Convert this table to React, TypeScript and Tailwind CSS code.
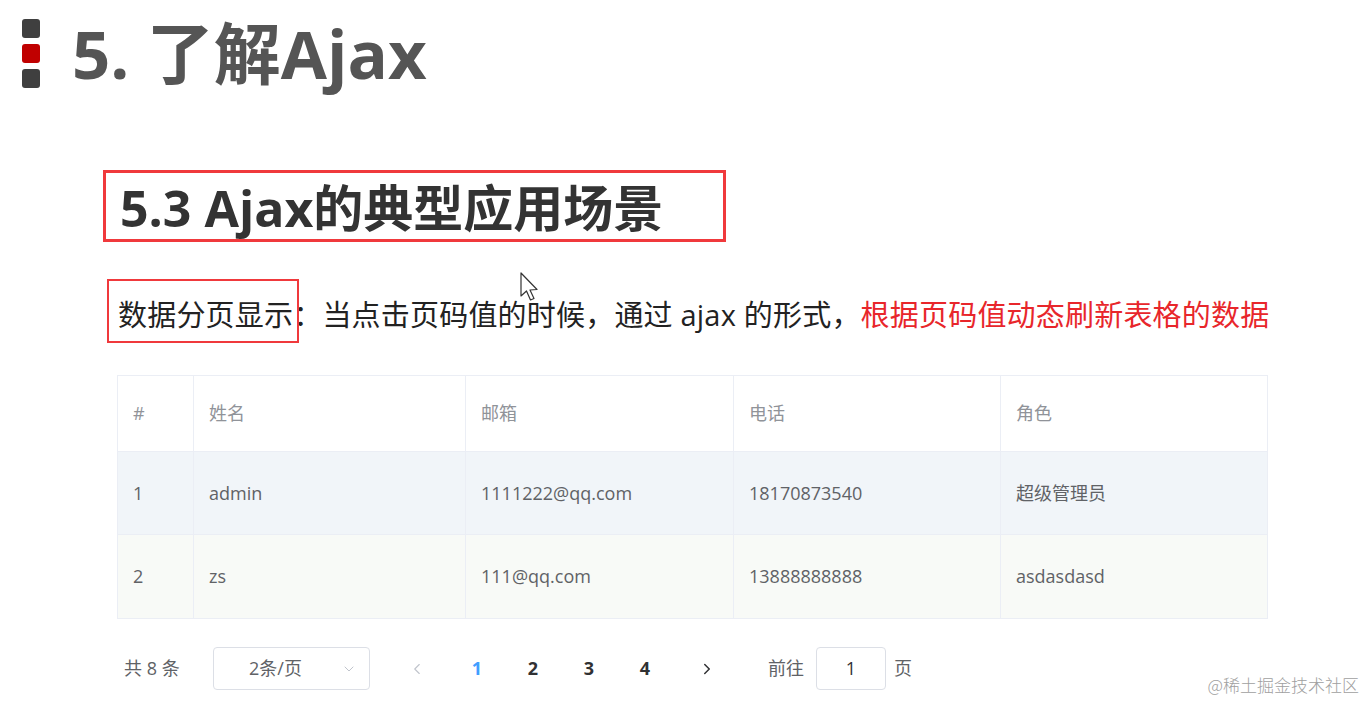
import { ChevronDown, ChevronLeft, ChevronRight } from 'lucide-react'

const rows = [
  { id: 1, name: 'admin', email: '1111222@qq.com', phone: '18170873540', role: '超级管理员' },
  { id: 2, name: 'zs', email: '111@qq.com', phone: '13888888888', role: 'asdasdasd' },
]

const font = { fontFamily: '"Open Sans", "Noto Sans CJK SC", sans-serif' }

function Cursor() {
  return (
    <svg width="22" height="32" viewBox="0 0 22 32" className="absolute left-[520px] top-[272px]">
      <path d="M1 1 L1 24 L6.5 19 L10.5 28 L14 26.5 L10 18 L17 17.5 Z" fill="#fff" stroke="#333" strokeWidth="1.2" strokeLinejoin="round" />
    </svg>
  )
}

export default function App() {
  return (
    <div className="relative w-[1367px] h-[703px] bg-white overflow-hidden" style={font}>
      {/* Slide title */}
      <div className="flex items-center pt-[19px] pl-[22px]">
        <div className="flex flex-col gap-[6px]">
          <div className="w-[18px] h-[19px] rounded-[3px] bg-[#3f3f3f]" />
          <div className="w-[18px] h-[19px] rounded-[3px] bg-[#c00000]" />
          <div className="w-[18px] h-[19px] rounded-[3px] bg-[#3f3f3f]" />
        </div>
        <h1 className="ml-[32px] text-[67px] leading-none font-bold text-[#555555]">5. 了解Ajax</h1>
      </div>

      {/* Section heading */}
      <div className="ml-[103px] mt-[82px] w-[623px] h-[72px] border-[3px] border-[#f0393c] flex items-center pl-[14px]">
        <h2 className="text-[50px] leading-none font-bold text-[#333333] pt-[4px]">5.3 Ajax的典型应用场景</h2>
      </div>

      {/* Description */}
      <div className="relative mt-[37px] ml-[107px] h-[64px] flex items-center">
        <div className="absolute left-0 top-0 w-[192px] h-[64px] border-[2px] border-[#f0393c]" />
        <p className="pl-[11px] pt-[6px] text-[29px] text-[#222222] leading-none whitespace-nowrap tracking-[0.2px]">
          数据分页显示：当点击页码值的时候，通过 ajax 的形式，<span className="text-[#e8262b]">根据页码值动态刷新表格的数据</span>
        </p>
      </div>

      {/* Table */}
      <div className="mt-[32px] ml-[117px] w-[1151px] border border-[#ebeef5] text-[18px] text-[#606266]">
        <div className="grid grid-cols-[76px_272px_268px_267px_1fr] h-[75px] text-[#909399] bg-white">
          <div className="flex items-center pl-[15px] border-r border-[#ebeef5]">#</div>
          <div className="flex items-center pl-[15px] border-r border-[#ebeef5]">姓名</div>
          <div className="flex items-center pl-[15px] border-r border-[#ebeef5]">邮箱</div>
          <div className="flex items-center pl-[15px] border-r border-[#ebeef5]">电话</div>
          <div className="flex items-center pl-[15px]">角色</div>
        </div>
        {rows.map((r, i) => (
          <div
            key={r.id}
            className={`grid grid-cols-[76px_272px_268px_267px_1fr] border-t border-[#ebeef5] ${i === 0 ? 'h-[83px] bg-[#f1f5f9]' : 'h-[84px] bg-[#f8faf7]'}`}
          >
            <div className="flex items-center pl-[15px] border-r border-[#ebeef5]">{r.id}</div>
            <div className="flex items-center pl-[15px] border-r border-[#ebeef5]">{r.name}</div>
            <div className="flex items-center pl-[15px] border-r border-[#ebeef5]">{r.email}</div>
            <div className="flex items-center pl-[15px] border-r border-[#ebeef5]">{r.phone}</div>
            <div className="flex items-center pl-[15px]">{r.role}</div>
          </div>
        ))}
      </div>

      {/* Pagination */}
      <div className="mt-[28px] ml-[124px] flex items-center h-[43px] text-[18px] text-[#606266]">
        <span className="w-[89px]">共 8 条</span>
        <div className="w-[157px] h-[43px] border border-[#dcdfe6] rounded-[4px] flex items-center pl-[35px] pr-[12px] justify-between">
          <span>2条/页</span>
          <ChevronDown size={16} strokeWidth={1.5} className="text-[#c0c4cc]" />
        </div>
        <ChevronLeft size={18} strokeWidth={1.5} className="ml-[38px] text-[#c0c4cc]" />
        <div className="flex items-center font-bold text-[#303133] ml-[44px] gap-[42px]">
          <span className="w-[14px] text-center text-[#409eff]">1</span>
          <span className="w-[14px] text-center">2</span>
          <span className="w-[14px] text-center">3</span>
          <span className="w-[14px] text-center">4</span>
        </div>
        <ChevronRight size={18} strokeWidth={2} className="ml-[46px] text-[#303133]" />
        <span className="ml-[52px]">前往</span>
        <div className="ml-[12px] w-[70px] h-[43px] border border-[#dcdfe6] rounded-[4px] flex items-center justify-center text-[#303133]">1</div>
        <span className="ml-[8px]">页</span>
      </div>

      <span className="absolute right-[8px] bottom-[6px] text-[17px] text-[#a0a0a0]" style={{ fontFamily: '"Noto Sans CJK SC", sans-serif', fontWeight: 300 }}>
        @稀土掘金技术社区
      </span>

      <Cursor />
    </div>
  )
}
